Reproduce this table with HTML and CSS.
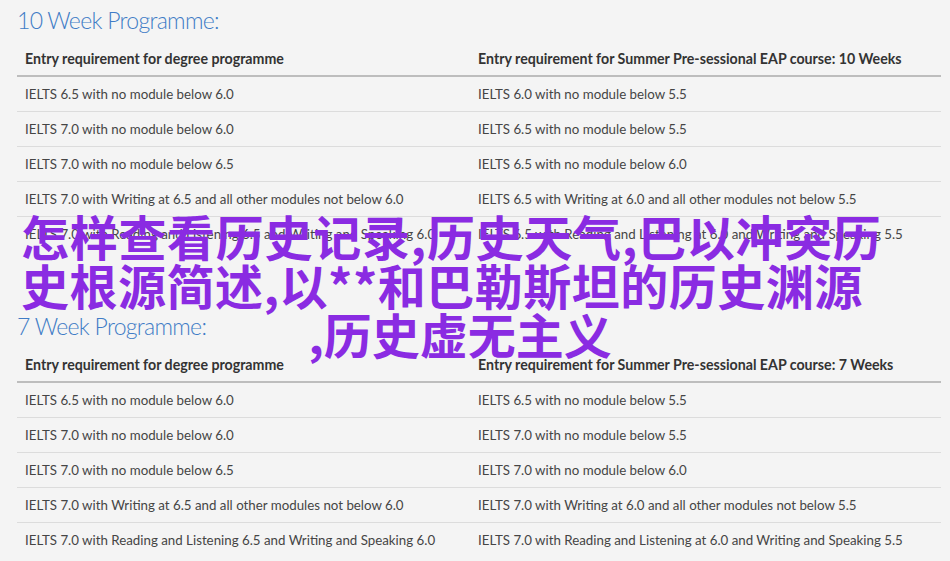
FILE: index.html
```html
<!DOCTYPE html>
<html lang="en">
<head>
<meta charset="utf-8">
<title>Entry requirements</title>
<link rel="stylesheet" href="styles.css">
</head>
<body>
<main class="page">
  <h2 class="prog-title">10 Week Programme:</h2>
  <table class="req-table">
    <thead>
      <tr><th class="col-a">Entry requirement for degree programme</th><th>Entry requirement for Summer Pre-sessional EAP course: 10 Weeks</th></tr>
    </thead>
    <tbody>
      <tr><td>IELTS 6.5 with no module below 6.0</td><td>IELTS 6.0 with no module below 5.5</td></tr>
      <tr><td>IELTS 7.0 with no module below 6.0</td><td>IELTS 6.5 with no module below 5.5</td></tr>
      <tr><td>IELTS 7.0 with no module below 6.5</td><td>IELTS 6.5 with no module below 6.0</td></tr>
      <tr><td>IELTS 7.0 with Writing at 6.5 and all other modules not below 6.0</td><td>IELTS 6.5 with Writing at 6.0 and all other modules not below 5.5</td></tr>
      <tr><td>IELTS 7.0 with Reading and Listening 6.5 and Writing and Speaking 6.0</td><td>IELTS 6.5 with Reading and Listening at 6.0 and Writing and Speaking 5.5</td></tr>
    </tbody>
  </table>

  <h2 class="prog-title second">7 Week Programme:</h2>
  <table class="req-table">
    <thead>
      <tr><th class="col-a">Entry requirement for degree programme</th><th>Entry requirement for Summer Pre-sessional EAP course: 7 Weeks</th></tr>
    </thead>
    <tbody>
      <tr><td>IELTS 6.5 with no module below 6.0</td><td>IELTS 6.5 with no module below 5.5</td></tr>
      <tr><td>IELTS 7.0 with no module below 6.0</td><td>IELTS 7.0 with no module below 5.5</td></tr>
      <tr><td>IELTS 7.0 with no module below 6.5</td><td>IELTS 7.0 with no module below 6.0</td></tr>
      <tr><td>IELTS 7.0 with Writing at 6.5 and all other modules not below 6.0</td><td>IELTS 7.0 with Writing at 6.0 and all other modules not below 5.5</td></tr>
      <tr><td>IELTS 7.0 with Reading and Listening 6.5 and Writing and Speaking 6.0</td><td>IELTS 7.0 with Reading and Listening at 6.0 and Writing and Speaking 5.5</td></tr>
    </tbody>
  </table>

  <h1 class="overlay-title">
    <span class="ol-line ol-1">怎样查看历史记录,历史天气,巴以冲突历</span>
    <span class="ol-line ol-2">史根源简述,以**和巴勒斯坦的历史渊源</span>
    <span class="ol-line ol-3">,历史虚无主义</span>
  </h1>
</main>
</body>
</html>
```

FILE: styles.css
```css
html, body {
  margin: 0;
  padding: 0;
  background: #f4f4f4;
}

.page {
  position: relative;
  padding: 0 9px 0 17px;
  font-family: "Lato", "Noto Sans", sans-serif;
  color: #444;
}

.prog-title {
  margin: 0;
  height: 41px;
  line-height: 41px;
  font-family: "Lato", sans-serif;
  font-weight: 300;
  font-size: 23px;
  letter-spacing: -0.7px;
  color: #3f7cc6;
}

.prog-title.second {
  margin-top: 55px;
}

.req-table {
  width: 924px;
  border-collapse: collapse;
  font-size: 13.3px;
}

.req-table th,
.req-table td {
  text-align: left;
  padding: 8px 8px;
  line-height: 18px;
}

.req-table th {
  font-weight: 700;
  font-size: 14.2px;
  color: #333;
  height: 18px;
  padding-top: 9px;
  padding-bottom: 7px;
  border-bottom: 2px solid #bdbdbd;
}

.req-table th.col-a {
  width: 437px;
}

.req-table td {
  border-top: 1px solid #dcdcdc;
  color: #454545;
}

.req-table tbody tr:first-child td {
  border-top: 0;
}

.overlay-title {
  position: absolute;
  left: 0;
  top: 211px;
  width: 920px;
  margin: 0;
  font-family: "Noto Sans CJK SC", "Noto Sans", sans-serif;
  font-weight: 700;
  font-size: 48px;
  line-height: 49px;
  color: #8a2be2;
}

.ol-line {
  display: block;
  white-space: nowrap;
  padding-left: 21px;
}

.ol-1 {
  letter-spacing: 0.7px;
}

.ol-2 {
  letter-spacing: 0.5px;
}

.ol-3 {
  padding-left: 0;
  text-align: center;
}
```
